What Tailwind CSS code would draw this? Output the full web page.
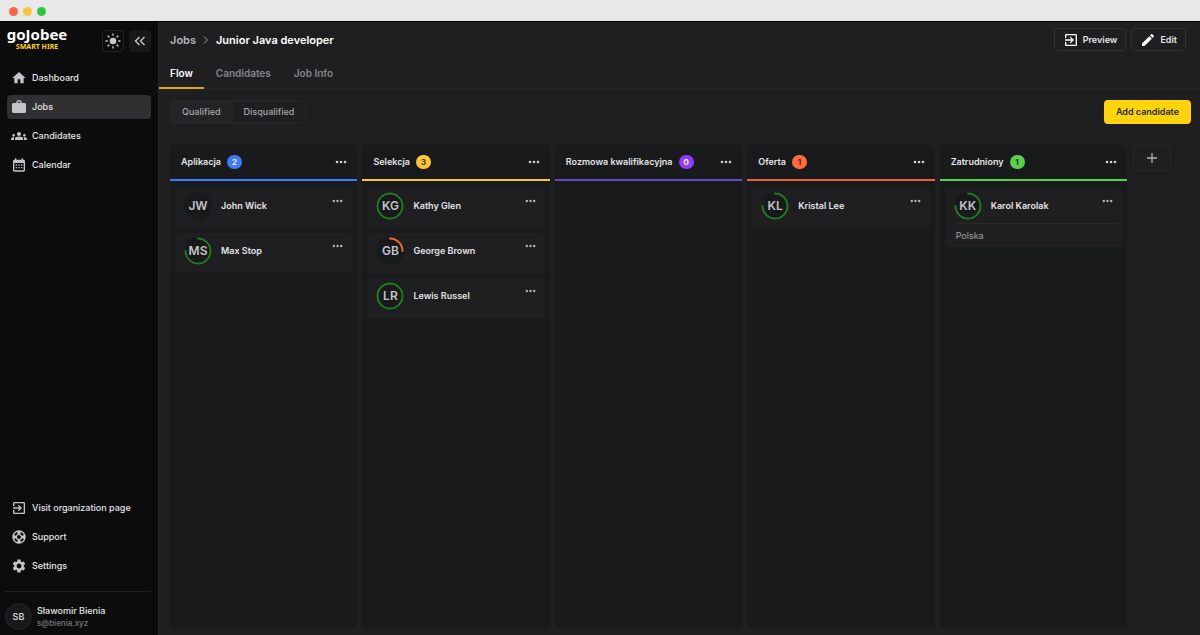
<!DOCTYPE html>
<html lang="en">
<head>
    <meta charset="UTF-8">
    <meta name="viewport" content="width=device-width, initial-scale=1.0">
    <title>goJobee - Junior Java developer</title>
    <script src="https://cdn.jsdelivr.net/npm/@tailwindcss/browser@4"></script>
</head>
<body class="bg-[#1f1f21] font-['Inter','Liberation_Sans',sans-serif] text-[9px] leading-4 text-[#e4e4e7]">
    <!-- Icon set -->
    <svg class="hidden">
        <symbol id="home" viewBox="0 0 24 24"><path d="M10 20v-6h4v6h5v-8h3L12 3 2 12h3v8z"/></symbol>
        <symbol id="jobs" viewBox="0 0 24 24"><path d="M21 6h-5V4l-2-2h-4L8 4v2H3L1.500 7.500v12L3 21h18l1.500-1.500v-12zM10 4h4v2h-4z"/></symbol>
        <symbol id="groups" viewBox="0 0 24 24"><path d="M12 12.750c1.630 0 3.070.39 4.240.9 1.080.48 1.760 1.560 1.760 2.730V18H6v-1.610c0-1.180.68-2.260 1.760-2.730 1.170-.52 2.610-.91 4.240-.91zM4 13c1.100 0 2-.9 2-2s-.9-2-2-2-2 .9-2 2 .9 2 2 2zm1.130 1.100C4.760 14.040 4.390 14 4 14c-.99 0-1.930.21-2.780.58C.48 14.900 0 15.620 0 16.430V18h4.500v-1.610c0-.83.23-1.610.63-2.290zM20 13c1.100 0 2-.9 2-2s-.9-2-2-2-2 .9-2 2 .9 2 2 2zm4 3.430c0-.81-.48-1.530-1.220-1.850C21.930 14.210 20.990 14 20 14c-.39 0-.76.04-1.130.1.400.68.63 1.460.63 2.290V18H24v-1.570zM12 6c1.660 0 3 1.340 3 3s-1.340 3-3 3-3-1.340-3-3 1.340-3 3-3z"/></symbol>
        <symbol id="calendar" viewBox="0 0 24 24"><path d="M19 4h-1V2h-2v2H8V2H6v2H5c-1.110 0-1.990.9-1.990 2L3 20c0 1.100.89 2 2 2h14c1.100 0 2-.9 2-2V6c0-1.100-.9-2-2-2zm0 16H5V9h14v11zM7 11h2v2H7zm4 0h2v2h-2zm4 0h2v2h-2zM7 15h2v2H7zm4 0h2v2h-2zm4 0h2v2h-2z"/></symbol>
        <symbol id="exit" viewBox="0 0 24 24"><path d="M10.090 15.590 11.500 17l5-5-5-5-1.410 1.410L12.670 11H3v2h9.670zM19 3H5c-1.110 0-2 .9-2 2v4h2V5h14v14H5v-4H3v4c0 1.100.89 2 2 2h14c1.100 0 2-.9 2-2V5c0-1.100-.9-2-2-2z"/></symbol>
        <symbol id="support" viewBox="0 0 24 24"><path d="M12 2C6.480 2 2 6.480 2 12s4.480 10 10 10 10-4.480 10-10S17.520 2 12 2zm7.460 7.120-2.780 1.150c-.51-1.360-1.580-2.440-2.950-2.940l1.150-2.780c2.100.8 3.770 2.470 4.580 4.570zM12 15c-1.660 0-3-1.340-3-3s1.340-3 3-3 3 1.340 3 3-1.340 3-3 3zM9.130 4.540l1.170 2.780c-1.380.5-2.470 1.590-2.980 2.970L4.540 9.130c.81-2.110 2.480-3.780 4.590-4.590zM4.540 14.870l2.780-1.150c.51 1.380 1.590 2.460 2.970 2.960l-1.170 2.780c-2.100-.81-3.770-2.480-4.580-4.590zm10.340 4.590-1.150-2.780c1.370-.51 2.450-1.590 2.950-2.970l2.780 1.170c-.81 2.100-2.480 3.770-4.580 4.580z"/></symbol>
        <symbol id="settings" viewBox="0 0 24 24"><path d="M19.140 12.940c.04-.3.060-.61.060-.94s-.02-.64-.07-.94l2.030-1.580c.18-.14.230-.41.120-.61l-1.920-3.320c-.12-.22-.37-.29-.59-.22l-2.390.96c-.5-.38-1.030-.7-1.620-.94l-.36-2.540c-.04-.24-.24-.41-.48-.41h-3.840c-.24 0-.43.17-.47.41l-.36 2.540c-.59.24-1.130.57-1.620.94l-2.390-.96c-.22-.08-.47 0-.59.22L2.740 8.870c-.12.21-.08.47.12.61l2.030 1.580c-.05.3-.09.63-.09.94s.02.64.070.94l-2.030 1.580c-.18.14-.23.41-.12.61l1.920 3.320c.12.22.37.29.59.22l2.390-.96c.5.38 1.030.7 1.620.94l.36 2.540c.05.24.24.41.48.41h3.840c.24 0 .44-.17.470-.41l.36-2.540c.59-.24 1.130-.56 1.620-.94l2.390.96c.22.08.47 0 .59-.22l1.920-3.320c.12-.22.07-.47-.12-.61zM12 15.600c-1.980 0-3.600-1.620-3.600-3.600s1.620-3.600 3.600-3.600 3.600 1.620 3.600 3.600-1.620 3.600-3.600 3.600z"/></symbol>
        <symbol id="edit" viewBox="0 0 24 24"><path d="M3 17.250V21h3.750L17.810 9.940l-3.750-3.750zM20.710 7.040c.39-.39.39-1.020 0-1.410l-2.340-2.340c-.39-.39-1.020-.39-1.410 0l-1.830 1.830 3.750 3.750z"/></symbol>
        <symbol id="dots" viewBox="0 0 12 4"><circle cx="2" cy="2" r="1.300"/><circle cx="6" cy="2" r="1.300"/><circle cx="10" cy="2" r="1.300"/></symbol>
        <symbol id="sun" viewBox="0 0 24 24"><circle cx="12" cy="12" r="5"/><path d="M12 1.500v2M12 20.500v2M1.500 12h2M20.500 12h2M4.600 4.600l1.400 1.400M18 18l1.400 1.400M4.600 19.400l1.400-1.400M18 6l1.400-1.400" stroke="currentColor" stroke-width="2" stroke-linecap="round"/></symbol>
        <!-- Score rings: full, three quarters, one quarter -->
        <symbol id="ring-100" viewBox="0 0 28 28"><circle cx="14" cy="14" r="12.500" fill="none" stroke="currentColor" stroke-width="2"/></symbol>
        <symbol id="ring-75" viewBox="0 0 28 28"><path d="M14 1.500A12.500 12.500 0 1 1 1.500 14" fill="none" stroke="currentColor" stroke-width="2" stroke-linecap="round"/></symbol>
        <symbol id="ring-25" viewBox="0 0 28 28"><path d="M14 1.500A12.500 12.500 0 0 1 26.500 14" fill="none" stroke="currentColor" stroke-width="2" stroke-linecap="round"/></symbol>
    </svg>

    <div class="flex min-h-screen flex-col">
        <!-- Window bar -->
        <div class="flex h-[21px] items-center gap-[5px] bg-[#e8e8e8] px-[9px] pt-px">
            <span class="size-[9px] rounded-full bg-[#ff6541]"></span>
            <span class="size-[9px] rounded-full bg-[#fdc43b]"></span>
            <span class="size-[9px] rounded-full bg-[#2bc840]"></span>
        </div>

        <div class="flex flex-1">
            <!-- Sidebar -->
            <aside class="flex w-[159px] shrink-0 flex-col border-t border-r border-t-black border-r-[#28282a] bg-[#0c0c0d] px-[7px] font-medium">
                <div class="flex h-[30px] items-end gap-[5px]">
                    <a href="#" class="flex w-[60px] flex-col items-center font-['Noto_Sans',sans-serif] font-bold">
                        <span class="text-[15px] leading-4 text-white">goJobee</span>
                        <span class="text-[7px] leading-[10px] text-[#ffd60a]">SMART HIRE</span>
                    </a>
                    <button aria-label="Toggle theme" class="ml-auto flex size-[22px] items-center justify-center rounded border border-[#242426] bg-[#0c0c0d] text-[#c8c8cc]">
                        <svg class="size-4 shrink-0 fill-current"><use href="#sun"/></svg>
                    </button>
                    <button aria-label="Collapse menu" class="flex size-[22px] items-center justify-center rounded bg-[#18181a] text-[#c8c8cc]">
                        <svg viewBox="0 0 12 12" class="size-3 fill-none stroke-current stroke-[1.4]"><path d="M5.500 2 1.500 6l4 4M10.500 2l-4 4 4 4"/></svg>
                    </button>
                </div>

                <nav class="mt-[14px] flex flex-col gap-[5px]">
                    <a href="#" class="flex h-6 items-center gap-[5px] rounded px-1"><svg class="size-4 fill-[#c4c4c9]"><use href="#home"/></svg>Dashboard</a>
                    <a href="#" class="flex h-6 items-center gap-[5px] rounded bg-[#303033] px-1"><svg class="size-4 fill-[#c4c4c9]"><use href="#jobs"/></svg>Jobs</a>
                    <a href="#" class="flex h-6 items-center gap-[5px] rounded px-1"><svg class="size-4 fill-[#c4c4c9]"><use href="#groups"/></svg>Candidates</a>
                    <a href="#" class="flex h-6 items-center gap-[5px] rounded px-1"><svg class="size-4 fill-[#c4c4c9]"><use href="#calendar"/></svg>Calendar</a>
                </nav>

                <nav class="mt-auto flex flex-col gap-[5px]">
                    <a href="#" class="flex h-6 items-center gap-[5px] rounded px-1"><svg class="size-4 fill-[#c4c4c9]"><use href="#exit"/></svg>Visit organization page</a>
                    <a href="#" class="flex h-6 items-center gap-[5px] rounded px-1"><svg class="size-4 fill-[#c4c4c9]"><use href="#support"/></svg>Support</a>
                    <a href="#" class="flex h-6 items-center gap-[5px] rounded px-1"><svg class="size-4 fill-[#c4c4c9]"><use href="#settings"/></svg>Settings</a>
                </nav>

                <div class="-ml-[2px] mt-[13px] flex items-center gap-[5px] border-t border-[#1f1f21] pt-[11px] pb-[5px]">
                    <span class="flex size-[27px] items-center justify-center rounded-full border border-[#28282a] bg-[#18191b] font-semibold text-[#d0d0d4]">SB</span>
                    <div>
                        <p class="leading-[13px]">Sławomir Bienia</p>
                        <p class="text-[8px] leading-3 text-[#77777b]">s@bienia.xyz</p>
                    </div>
                </div>
            </aside>

            <!-- Main -->
            <main class="flex flex-1 flex-col border-t border-black font-semibold">
                <header class="border-b border-[#28282a]">
                    <div class="flex h-[35px] items-center pl-[11px] pr-[14px] text-[11px]">
                        <a href="#" class="text-[#b4b4b8]">Jobs</a>
                        <svg viewBox="0 0 8 8" class="mx-[6px] size-2 fill-none stroke-[#a0a0a4]"><path d="M2 .5 5.500 4 2 7.500"/></svg>
                        <h1 class="text-white">Junior Java developer</h1>
                        <div class="ml-auto flex gap-[5px] text-[9px]">
                            <button class="flex h-[23px] items-center gap-1 rounded border border-[#303032] px-2"><svg class="size-4 fill-white"><use href="#exit"/></svg>Preview</button>
                            <button class="flex h-[23px] items-center gap-1 rounded border border-[#303032] px-2"><svg class="size-4 fill-white"><use href="#edit"/></svg>Edit</button>
                        </div>
                    </div>
                    <nav class="-mb-px flex h-8 gap-px text-[10px] text-[#858589]">
                        <a href="#" class="border-b-2 border-[#d6ac10] px-[11px] pt-2 text-white">Flow</a>
                        <a href="#" class="px-[11px] pt-2">Candidates</a>
                        <a href="#" class="px-[11px] pt-2">Job Info</a>
                    </nav>
                </header>

                <div class="flex items-center justify-between pl-[11px] pr-[9px] pt-[11px]">
                    <div class="flex h-6 overflow-hidden rounded border border-[#29292b] font-medium text-[#a5a5a9]">
                        <button class="border-r border-[#29292b] bg-[#242426] px-[11px]">Qualified</button>
                        <button class="px-[11px]">Disqualified</button>
                    </div>
                    <button class="h-6 rounded bg-[#ffd40a] px-3 text-[#2b270f]">Add candidate</button>
                </div>

                <!-- Board -->
                <div class="flex flex-1 items-stretch gap-[5px] pb-[7px] pl-[11px] pr-[29px] pt-[21px]">
                    <section class="min-w-0 flex-1 rounded bg-[#191a1c]">
                        <div class="flex h-9 items-center gap-[6px] border-b-2 border-[#3e7bfa] pl-[11px] pr-[10px]">
                            <h2>Aplikacja</h2>
                            <span class="flex h-[14px] w-[15px] items-center justify-center rounded-full bg-[#3e7bfa] text-[8px] text-white">2</span>
                            <button aria-label="Stage menu" class="ml-auto"><svg class="h-1 w-3 fill-[#d0d0d4]"><use href="#dots"/></svg></button>
                        </div>
                        <div class="flex flex-col gap-[5px] px-[5px] pt-[7px]">
                            <article class="rounded bg-[#1f1f21] px-[9px]">
                                <div class="flex h-10 items-start gap-[9px] pt-1">
                                    <span class="relative flex size-7 items-center justify-center rounded-full bg-[#18191b] text-xs text-[#c4c4c8]">JW</span>
                                    <h3 class="pt-[6px]">John Wick</h3>
                                    <button aria-label="Candidate menu" class="ml-auto pt-[7px]"><svg class="h-1 w-[11px] fill-[#b4b4b8]"><use href="#dots"/></svg></button>
                                </div>
                            </article>
                            <article class="rounded bg-[#1f1f21] px-[9px]">
                                <div class="flex h-10 items-start gap-[9px] pt-1">
                                    <span class="relative flex size-7 items-center justify-center rounded-full bg-[#18191b] text-xs text-[#c4c4c8]">MS<svg class="absolute inset-0 size-7 text-[#217a24]"><use href="#ring-75"/></svg></span>
                                    <h3 class="pt-[6px]">Max Stop</h3>
                                    <button aria-label="Candidate menu" class="ml-auto pt-[7px]"><svg class="h-1 w-[11px] fill-[#b4b4b8]"><use href="#dots"/></svg></button>
                                </div>
                            </article>
                        </div>
                    </section>

                    <section class="min-w-0 flex-1 rounded bg-[#191a1c]">
                        <div class="flex h-9 items-center gap-[6px] border-b-2 border-[#ffc53a] pl-[11px] pr-[10px]">
                            <h2>Selekcja</h2>
                            <span class="flex h-[14px] w-[15px] items-center justify-center rounded-full bg-[#ffc53a] text-[8px] text-[#33270b]">3</span>
                            <button aria-label="Stage menu" class="ml-auto"><svg class="h-1 w-3 fill-[#d0d0d4]"><use href="#dots"/></svg></button>
                        </div>
                        <div class="flex flex-col gap-[5px] px-[5px] pt-[7px]">
                            <article class="rounded bg-[#1f1f21] px-[9px]">
                                <div class="flex h-10 items-start gap-[9px] pt-1">
                                    <span class="relative flex size-7 items-center justify-center rounded-full bg-[#18191b] text-xs text-[#c4c4c8]">KG<svg class="absolute inset-0 size-7 text-[#217a24]"><use href="#ring-100"/></svg></span>
                                    <h3 class="pt-[6px]">Kathy Glen</h3>
                                    <button aria-label="Candidate menu" class="ml-auto pt-[7px]"><svg class="h-1 w-[11px] fill-[#b4b4b8]"><use href="#dots"/></svg></button>
                                </div>
                            </article>
                            <article class="rounded bg-[#1f1f21] px-[9px]">
                                <div class="flex h-10 items-start gap-[9px] pt-1">
                                    <span class="relative flex size-7 items-center justify-center rounded-full bg-[#18191b] text-xs text-[#c4c4c8]">GB<svg class="absolute inset-0 size-7 text-[#f26b35]"><use href="#ring-25"/></svg></span>
                                    <h3 class="pt-[6px]">George Brown</h3>
                                    <button aria-label="Candidate menu" class="ml-auto pt-[7px]"><svg class="h-1 w-[11px] fill-[#b4b4b8]"><use href="#dots"/></svg></button>
                                </div>
                            </article>
                            <article class="rounded bg-[#1f1f21] px-[9px]">
                                <div class="flex h-10 items-start gap-[9px] pt-1">
                                    <span class="relative flex size-7 items-center justify-center rounded-full bg-[#18191b] text-xs text-[#c4c4c8]">LR<svg class="absolute inset-0 size-7 text-[#217a24]"><use href="#ring-100"/></svg></span>
                                    <h3 class="pt-[6px]">Lewis Russel</h3>
                                    <button aria-label="Candidate menu" class="ml-auto pt-[7px]"><svg class="h-1 w-[11px] fill-[#b4b4b8]"><use href="#dots"/></svg></button>
                                </div>
                            </article>
                        </div>
                    </section>

                    <section class="min-w-0 flex-1 rounded bg-[#191a1c]">
                        <div class="flex h-9 items-center gap-[6px] border-b-2 border-[#6b46c8] pl-[11px] pr-[10px]">
                            <h2 class="whitespace-nowrap">Rozmowa kwalifikacyjna</h2>
                            <span class="flex h-[14px] w-[15px] items-center justify-center rounded-full bg-[#8f3dfb] text-[8px] text-white">0</span>
                            <button aria-label="Stage menu" class="ml-auto"><svg class="h-1 w-3 fill-[#d0d0d4]"><use href="#dots"/></svg></button>
                        </div>
                    </section>

                    <section class="min-w-0 flex-1 rounded bg-[#191a1c]">
                        <div class="flex h-9 items-center gap-[6px] border-b-2 border-[#e8653a] pl-[11px] pr-[10px]">
                            <h2>Oferta</h2>
                            <span class="flex h-[14px] w-[15px] items-center justify-center rounded-full bg-[#ff6a3d] text-[8px] text-[#33180b]">1</span>
                            <button aria-label="Stage menu" class="ml-auto"><svg class="h-1 w-3 fill-[#d0d0d4]"><use href="#dots"/></svg></button>
                        </div>
                        <div class="flex flex-col gap-[5px] px-[5px] pt-[7px]">
                            <article class="rounded bg-[#1f1f21] px-[9px]">
                                <div class="flex h-10 items-start gap-[9px] pt-1">
                                    <span class="relative flex size-7 items-center justify-center rounded-full bg-[#18191b] text-xs text-[#c4c4c8]">KL<svg class="absolute inset-0 size-7 text-[#217a24]"><use href="#ring-75"/></svg></span>
                                    <h3 class="pt-[6px]">Kristal Lee</h3>
                                    <button aria-label="Candidate menu" class="ml-auto pt-[7px]"><svg class="h-1 w-[11px] fill-[#b4b4b8]"><use href="#dots"/></svg></button>
                                </div>
                            </article>
                        </div>
                    </section>

                    <section class="min-w-0 flex-1 rounded bg-[#191a1c]">
                        <div class="flex h-9 items-center gap-[6px] border-b-2 border-[#57d14b] pl-[11px] pr-[10px]">
                            <h2>Zatrudniony</h2>
                            <span class="flex h-[14px] w-[15px] items-center justify-center rounded-full bg-[#57d14b] text-[8px] text-[#0d2b0b]">1</span>
                            <button aria-label="Stage menu" class="ml-auto"><svg class="h-1 w-3 fill-[#d0d0d4]"><use href="#dots"/></svg></button>
                        </div>
                        <div class="flex flex-col gap-[5px] px-[5px] pt-[7px]">
                            <article class="rounded bg-[#1f1f21] px-[9px]">
                                <div class="flex h-[35px] items-start gap-[9px] pt-1">
                                    <span class="relative flex size-7 items-center justify-center rounded-full bg-[#18191b] text-xs text-[#c4c4c8]">KK<svg class="absolute inset-0 size-7 text-[#217a24]"><use href="#ring-75"/></svg></span>
                                    <h3 class="pt-[6px]">Karol Karolak</h3>
                                    <button aria-label="Candidate menu" class="ml-auto pt-[7px]"><svg class="h-1 w-[11px] fill-[#b4b4b8]"><use href="#dots"/></svg></button>
                                </div>
                                <p class="-mr-1 ml-[2px] border-t border-[#2a2a2c] pt-1 pb-[3px] font-normal text-[#a0a0a4]">Polska</p>
                            </article>
                        </div>
                    </section>

                    <button aria-label="Add stage" class="ml-px flex h-[26px] w-[38px] shrink-0 items-center justify-center rounded border border-[#29292b]">
                        <svg viewBox="0 0 10 10" class="size-[10px] stroke-[#b4b4b8] stroke-[1.3]"><path d="M5 0v10M0 5h10"/></svg>
                    </button>
                </div>
            </main>
        </div>
    </div>
</body>
</html>
